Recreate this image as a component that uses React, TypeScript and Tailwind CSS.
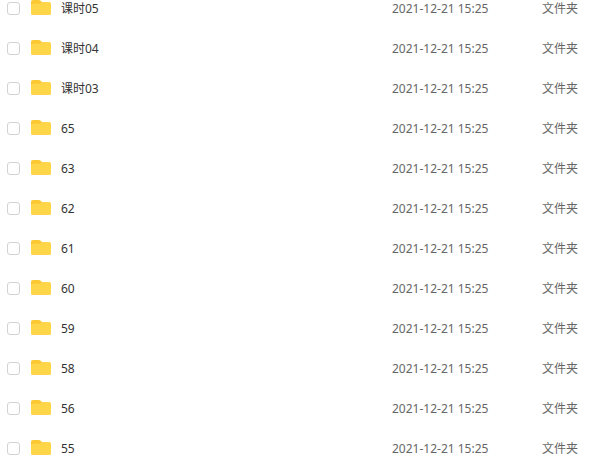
import React, { useState } from 'react';

interface FolderItem {
  name: string;
  modified: string;
  type: string;
}

const names = ['课时05', '课时04', '课时03', '65', '63', '62', '61', '60', '59', '58', '56', '55'];

const folders: FolderItem[] = names.map(name => ({
  name,
  modified: '2021-12-21 15:25',
  type: '文件夹',
}));

const FolderIcon = () => (
  <svg width="20" height="16" viewBox="0 0 20 16" aria-hidden="true" className="shrink-0">
    <path d="M0 2a2 2 0 0 1 2-2h6a2 2 0 0 1 1.400.6L11 2.200h7a2 2 0 0 1 2 2V8H0z" fill="#fcc934" />
    <path d="M0 5.200a1.500 1.500 0 0 1 1.500-1.500h6.600a2 2 0 0 0 1.200-.5l.6-.5a2 2 0 0 1 1.200-.5H18a2 2 0 0 1 2 2v9.300a1.500 1.500 0 0 1-1.500 1.500h-17A1.500 1.500 0 0 1 0 13.500z" fill="#ffd54a" />
  </svg>
);

export default function App() {
  const [selected, setSelected] = useState<string[]>([]);

  const toggle = (name: string) => {
    setSelected(prev => (prev.includes(name) ? prev.filter(n => n !== name) : [...prev, name]));
  };

  return (
    <main className="h-screen overflow-hidden bg-white font-['Noto_Sans','Noto_Sans_CJK_SC',sans-serif] text-xs">
      <table className="-mt-3 w-full table-fixed border-collapse text-left">
        <colgroup>
          <col className="w-[31px]" />
          <col />
          <col className="w-[150px]" />
          <col className="w-[69px]" />
        </colgroup>
        <tbody>
          {folders.map(folder => (
            <tr key={folder.name} className="h-10">
              <td className="p-0 pl-[7px]">
                <input
                  type="checkbox"
                  aria-label={folder.name}
                  checked={selected.includes(folder.name)}
                  onChange={() => toggle(folder.name)}
                  className="block size-[13px] appearance-none rounded-[3px] border border-[#d2d2d6] bg-white checked:border-blue-500 checked:bg-blue-500"
                />
              </td>
              <td className="p-0 text-[#333333]">
                <div className="flex items-center gap-2.5">
                  <FolderIcon />
                  <span className="truncate pt-0.5">{folder.name}</span>
                </div>
              </td>
              <td className="p-0 pt-0.5 text-[#666666]">{folder.modified}</td>
              <td className="p-0 pt-0.5 text-[#666666]">{folder.type}</td>
            </tr>
          ))}
        </tbody>
      </table>
    </main>
  );
}
